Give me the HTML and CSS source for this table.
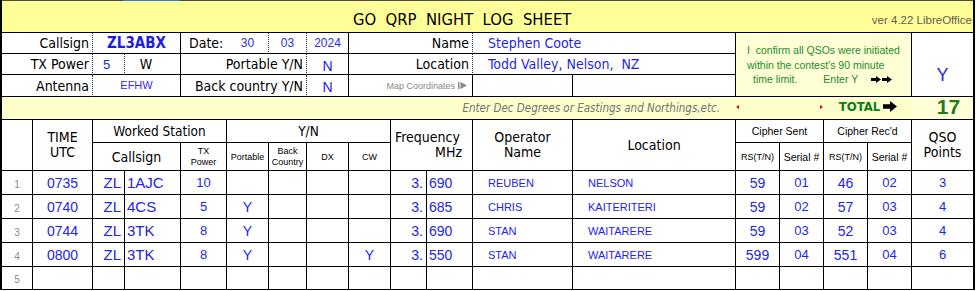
FILE: index.html
```html
<!DOCTYPE html>
<html lang="en">
<head>
<meta charset="utf-8">
<title>GO QRP Night Log Sheet</title>
<link rel="stylesheet" href="styles.css">
</head>
<body>
<div class="sheet">
<div class="topline"></div>
<div class="grid">
<div class="title s18 nr"><span class="title-text">GO&nbsp; QRP&nbsp; NIGHT&nbsp; LOG&nbsp; SHEET</span><span class="ver">ver 4.22 LibreOffice</span></div>

<div class="lbl s2 dr">Callsign</div>
<div class="callsign s2">ZL3ABX</div>
<div class="lbl-l nr">Date:</div>
<div class="dv dr">30</div>
<div class="dv dr">03</div>
<div class="dv">2024</div>
<div class="lbl s3 dr">Name</div>
<div class="info s2">Stephen Coote</div>
<div class="confirm s4 r3"><p>I&nbsp; confirm all QSOs were initiated</p><p>within the contest's 90 minute</p><p class="cl3"><span class="tl3">time limit.</span><span class="ey">Enter Y</span><svg class="arr2" width="10" height="7" viewBox="0 0 10 7"><polygon points="0,2 5,2 5,0 10,3.5 5,7 5,5 0,5"/></svg><svg class="arr2" width="10" height="7" viewBox="0 0 10 7"><polygon points="0,2 5,2 5,0 10,3.5 5,7 5,5 0,5"/></svg></p></div>
<div class="ybig r3 nr">Y</div>

<div class="lbl s2 dr">TX Power</div>
<div class="pw dr">5</div>
<div class="watt">W</div>
<div class="lbl s3 dr">Portable Y/N</div>
<div class="yn-top">N</div>
<div class="lbl s3 dr">Location</div>
<div class="info s2">Todd Valley, Nelson,&nbsp; NZ</div>

<div class="lbl s2 dr">Antenna</div>
<div class="ant s2">EFHW</div>
<div class="lbl s3 dr">Back country Y/N</div>
<div class="yn-top">N</div>
<div class="map s3">Map Coordinates<svg width="9" height="7" viewBox="0 0 9 7"><rect x="0" y="0" width="1.5" height="7"/><polygon points="2.5,0 9,3.5 2.5,7"/></svg></div>
<div></div>
<div></div>

<div class="yel s13 nr enter">Enter Dec Degrees or Eastings and Northings,etc.</div>
<div class="yel s2 nr tri"><i class="tri-l"></i><i class="tri-r"></i></div>
<div class="yel s2 nr total">TOTAL<svg width="14" height="11" viewBox="0 0 14 11"><polygon points="0,3.3 7,3.3 7,0 14,5.5 7,11 7,7.7 0,7.7"/></svg></div>
<div class="yel2 nr tot">17</div>

<div class="r2"></div>
<div class="hd r2 two">TIME<br>UTC</div>
<div class="hd s3 hs">Worked Station</div>
<div class="hd s4 hs">Y/N</div>
<div class="hd s2 r2 freq"><span class="fq1">Frequency</span><span class="fq2">MHz</span></div>
<div class="hd r2 two">Operator<br>Name</div>
<div class="hd r2">Location</div>
<div class="hsm s2">Cipher Sent</div>
<div class="hsm s2">Cipher Rec'd</div>
<div class="hd r2 two nr">QSO<br>Points</div>

<div class="hd s2">Callsign</div>
<div class="tiny two">TX<br>Power</div>
<div class="tiny">Portable</div>
<div class="tiny two">Back<br>Country</div>
<div class="tiny">DX</div>
<div class="tiny">CW</div>
<div class="tiny">RS(T/N)</div>
<div class="ser">Serial #</div>
<div class="tiny">RS(T/N)</div>
<div class="ser">Serial #</div>

<div class="rn">1</div><div class="tm">0735</div><div class="zl">ZL</div><div class="cs">1AJC</div><div class="pwr">10</div><div class="yn"></div><div class="yn"></div><div class="yn"></div><div class="yn"></div><div class="f3">3.</div><div class="fr">690</div><div class="nm">REUBEN</div><div class="nm">NELSON</div><div class="rs">59</div><div class="sn">01</div><div class="rs">46</div><div class="sn">02</div><div class="pts nr">3</div>

<div class="rn">2</div><div class="tm">0740</div><div class="zl">ZL</div><div class="cs">4CS</div><div class="pwr">5</div><div class="yn">Y</div><div class="yn"></div><div class="yn"></div><div class="yn"></div><div class="f3">3.</div><div class="fr">685</div><div class="nm">CHRIS</div><div class="nm">KAITERITERI</div><div class="rs">59</div><div class="sn">02</div><div class="rs">57</div><div class="sn">03</div><div class="pts nr">4</div>

<div class="rn">3</div><div class="tm">0744</div><div class="zl">ZL</div><div class="cs">3TK</div><div class="pwr">8</div><div class="yn">Y</div><div class="yn"></div><div class="yn"></div><div class="yn"></div><div class="f3">3.</div><div class="fr">690</div><div class="nm">STAN</div><div class="nm">WAITARERE</div><div class="rs">59</div><div class="sn">03</div><div class="rs">52</div><div class="sn">03</div><div class="pts nr">4</div>

<div class="rn">4</div><div class="tm">0800</div><div class="zl">ZL</div><div class="cs">3TK</div><div class="pwr">8</div><div class="yn">Y</div><div class="yn"></div><div class="yn"></div><div class="yn">Y</div><div class="f3">3.</div><div class="fr">550</div><div class="nm">STAN</div><div class="nm">WAITARERE</div><div class="rs">599</div><div class="sn">04</div><div class="rs">551</div><div class="sn">04</div><div class="pts nr">6</div>

<div class="rn">5</div><div></div><div></div><div></div><div></div><div></div><div></div><div></div><div></div><div></div><div></div><div></div><div></div><div></div><div></div><div></div><div></div><div class="nr"></div>
</div>
</div>
</body>
</html>
```

FILE: styles.css
```css
* { box-sizing: border-box; }
html, body { margin: 0; padding: 0; background: #fff; }
body { width: 976px; height: 291px; overflow: hidden; }

.sheet {
  width: 975px;
  border-left: 2px solid #000;
  border-right: 2px solid #000;
  font-family: "DejaVu Sans Condensed", "DejaVu Sans", sans-serif;
  color: #000;
}
.topline {
  height: 1px;
  background: linear-gradient(to right, #4a4a4a 121px, #2f7fd0 121px, #2f7fd0 178px, #4a4a4a 178px);
}
.grid {
  display: grid;
  grid-template-columns: 31px 60px 32px 56px 46px 42px 38px 42px 42px 36px 46px 100px 163px 44px 44px 44px 44px 61px;
  grid-template-rows: 32px 21px 21px 22px 23px 23px 28px 24px 24px 24px 24px 23px;
}
.grid > div {
  border-right: 1px solid #000;
  border-bottom: 1px solid #000;
  display: flex;
  align-items: center;
  justify-content: center;
  overflow: hidden;
  min-width: 0;
  white-space: nowrap;
}
.grid > .nr { border-right: none; }
.grid > .dr { border-right: 1px dotted #333; }

.s2 { grid-column: span 2; }
.s3 { grid-column: span 3; }
.s4 { grid-column: span 4; }
.s13 { grid-column: span 13; }
.s18 { grid-column: span 18; }
.r2 { grid-row: span 2; }
.r3 { grid-row: span 3; }

/* title bar */
.grid > .title {
  background: #ffff99;
  justify-content: flex-start;
  align-items: flex-end;
  padding: 0 1px 3px 351px;
}
.title-text { font-size: 16.5px; }
.ver {
  margin-left: auto;
  margin-bottom: 3px;
  font-family: "Liberation Sans", Arial, sans-serif;
  font-size: 11.5px;
  color: #5e5e4c;
}

/* info block */
.grid > .lbl { justify-content: flex-end; padding-right: 3px; font-size: 14px; }
.grid > .lbl-l { justify-content: flex-start; padding-left: 8px; font-size: 14px; }
.callsign { font-weight: bold; font-size: 15px; color: #1d1de6; }
.dv { font-family: "Liberation Sans", Arial, sans-serif; font-size: 12px; color: #2a2aee; }
.grid > .info { justify-content: flex-start; padding-left: 15px; font-size: 14px; color: #1f1fe8; }
.grid > .pw { justify-content: flex-start; padding-left: 10px; font-family: "Liberation Sans", Arial, sans-serif; font-size: 13px; color: #2323ee; }
.grid > .watt { font-size: 14px; padding: 0 13px 1px 0; }
.yn-top { font-family: "Liberation Sans", Arial, sans-serif; font-size: 14px; color: #2323ee; padding-top: 3px; }
.ant { font-family: "Liberation Sans", Arial, sans-serif; font-size: 11px; color: #3a2aee; padding-bottom: 2px; }
.grid > .map {
  justify-content: flex-end;
  padding-right: 5px;
  font-family: "Liberation Sans", Arial, sans-serif;
  font-size: 9px;
  color: #8a8a8a;
  gap: 3px;
}
.map svg { fill: #8a8a8a; }

.grid > .confirm {
  background: #ffffd6;
  flex-direction: column;
  align-items: flex-start;
  justify-content: flex-start;
  padding: 10px 0 0 11px;
  font-family: "Liberation Sans", Arial, sans-serif;
  font-size: 10.5px;
  line-height: 14.5px;
  color: #1d8a2e;
}
.confirm p { margin: 0; }
.cl3 { display: flex; align-items: center; }
.tl3 { margin-left: 6px; }
.ey { margin-left: 26px; margin-right: 13px; }
.arr2 { fill: #000; margin-right: 1px; }

.ybig {
  font-family: "Liberation Sans", Arial, sans-serif;
  font-size: 18px;
  color: #2323ee;
  padding-top: 21px;
}

/* yellow total row */
.yel { background: #ffffcc; }
.yel2 { background: #ffffd8; }
.grid > .enter {
  justify-content: flex-end;
  padding-right: 16px;
  font-style: italic;
  font-size: 11.5px;
  color: #737373;
}
.grid > .tri { justify-content: space-between; padding: 0 1px 3px 0; }
.tri-l, .tri-r { display: block; width: 0; height: 0; border-top: 2.5px solid transparent; border-bottom: 2.5px solid transparent; }
.tri-l { border-right: 3px solid #e00000; }
.tri-r { border-left: 3px solid #e00000; }
.grid > .total {
  gap: 3px;
  padding-bottom: 3px;
  font-weight: bold;
  font-size: 13px;
  color: #0d7a1c;
}
.total svg { fill: #000; }
.grid > .tot {
  padding: 0 0 2px 12px;
  font-family: "Liberation Sans", Arial, sans-serif;
  font-weight: bold;
  font-size: 21px;
  line-height: 18px;
  color: #1f7a22;
  overflow: visible;
}

/* table headers */
.hd { font-size: 14px; text-align: center; }
.two { line-height: 15px; }
.hs { font-size: 13.5px; }
.grid > .freq { flex-direction: column; align-items: stretch; line-height: 15px; }
.fq1 { text-align: left; padding-left: 4px; }
.fq2 { text-align: right; padding-right: 10px; }
.hsm { font-family: "Liberation Sans", Arial, sans-serif; font-size: 10.5px; }
.tiny { font-family: "Liberation Sans", Arial, sans-serif; font-size: 9px; text-align: center; }
.tiny.two { line-height: 11px; }
.ser { font-family: "Liberation Sans", Arial, sans-serif; font-size: 10.5px; }

/* data rows */
.grid > .rn {
  align-items: flex-end;
  padding-bottom: 4px;
  font-family: "Liberation Sans", Arial, sans-serif;
  font-size: 10px;
  line-height: 10px;
  color: #8c8c8c;
}
.tm, .zl, .cs, .pwr, .yn, .f3, .fr, .nm, .rs, .sn, .pts {
  font-family: "Liberation Sans", Arial, sans-serif;
  color: #2323ee;
}
.tm { font-size: 14px; }
.grid > .zl { justify-content: flex-end; padding-right: 3px; font-size: 15px; }
.grid > .cs { justify-content: flex-start; padding-left: 2px; font-size: 15px; }
.pwr { font-size: 13px; }
.yn { font-size: 14px; }
.grid > .f3 { justify-content: flex-end; padding-right: 3px; font-size: 14px; }
.grid > .fr { justify-content: flex-start; padding-left: 2px; font-size: 14px; }
.grid > .nm { justify-content: flex-start; padding-left: 15px; font-size: 11px; }
.rs { font-size: 14px; }
.sn { font-size: 13px; }
.pts { font-size: 13px; }
```
